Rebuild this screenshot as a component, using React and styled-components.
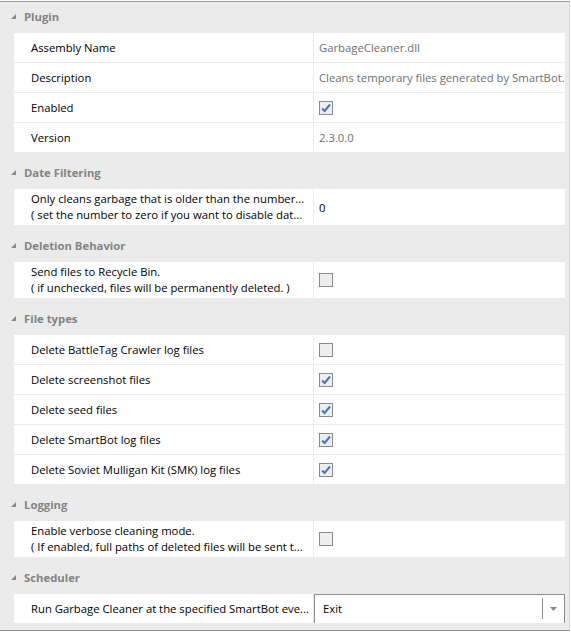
import React from "react";
import { styled, createGlobalStyle } from "styled-components";

const Global = createGlobalStyle`
  html, body {
    margin: 0;
    padding: 0;
    background: #ffffff;
  }
  body {
    font-family: "Segoe UI", "Open Sans", "Noto Sans", sans-serif;
    font-size: 11.3px;
  }
`;

const Frame = styled.div`
  width: 571px;
  height: 632px;
  padding-top: 1px;
  box-sizing: border-box;
`;

const Panel = styled.div`
  width: 570px;
  height: 630px;
  box-sizing: border-box;
  background: #ebebeb;
  border-top: 1px solid #9c9c9c;
  border-bottom: 1px solid #8e8e8e;
  border-right: 1px solid #d6d6d6;
  padding: 0 4px 0 14px;
  overflow: hidden;
`;

const Category = styled.section`
  &:not(:first-child) {
    margin-top: 5px;
  }
`;

const Header = styled.div`
  display: flex;
  align-items: center;
  height: ${(p) => (p.$first ? 31 : 32)}px;
  padding-bottom: 2px;
  box-sizing: border-box;
  margin-left: -14px;
  padding-left: 11px;
  gap: 8px;
  color: #848484;
  font-weight: bold;
`;

const Rows = styled.div`
  display: flex;
  flex-direction: column;
  gap: 1px;
`;

const Row = styled.div`
  display: grid;
  grid-template-columns: 299px 1fr;
  column-gap: 1px;
  height: ${(p) => (p.$tall ? 36 : 29)}px;
`;

const Name = styled.div`
  background: #ffffff;
  color: #000000;
  padding-left: 17px;
  display: flex;
  flex-direction: column;
  justify-content: center;
  line-height: 16px;
  white-space: nowrap;
  overflow: hidden;
`;

const Value = styled.div`
  background: #ffffff;
  color: ${(p) => (p.$readonly ? "#6f6f6f" : "#000000")};
  padding-left: 5px;
  display: flex;
  align-items: center;
  white-space: nowrap;
  overflow: hidden;
`;

const Box = styled.div`
  width: 14px;
  height: 14px;
  box-sizing: border-box;
  border: 1px solid #8a8a8a;
  background: #eeeeee;
  display: flex;
  align-items: center;
  justify-content: center;
`;

const Combo = styled.div`
  flex: 1;
  height: 30px;
  box-sizing: border-box;
  border: 1px solid #8c8c8c;
  display: flex;
  align-items: center;
  margin-left: -5px;
`;

const ComboText = styled.span`
  flex: 1;
  padding-left: 8px;
  color: #000000;
`;

const ComboButton = styled.div`
  width: 21px;
  height: 21px;
  border-left: 1px solid #8c8c8c;
  display: flex;
  align-items: center;
  justify-content: center;
`;

const Glyph = () => (
  <svg width="5" height="5" viewBox="0 0 5 5">
    <polygon points="5,0 5,5 0,5" fill="#8a8a8a" />
  </svg>
);

const Check = ({ on }) => (
  <Box>
    {on && (
      <svg width="12" height="12" viewBox="0 0 12 12">
        <path d="M2 6.5 L4.6 9 L10 2.5" fill="none" stroke="#3f7cb5" strokeWidth="2" />
      </svg>
    )}
  </Box>
);

const Arrow = () => (
  <svg width="7" height="4" viewBox="0 0 7 4">
    <polygon points="0,0 7,0 3.5,4" fill="#8a8a8a" />
  </svg>
);

const data = [
  {
    title: "Plugin",
    rows: [
      { name: ["Assembly Name"], value: "GarbageCleaner.dll", readonly: true },
      { name: ["Description"], value: "Cleans temporary files generated by SmartBot.", readonly: true },
      { name: ["Enabled"], check: true },
      { name: ["Version"], value: "2.3.0.0", readonly: true },
    ],
  },
  {
    title: "Date Filtering",
    rows: [
      {
        name: [
          "Only cleans garbage that is older than the number...",
          "( set the number to zero if you want to disable dat...",
        ],
        value: "0",
      },
    ],
  },
  {
    title: "Deletion Behavior",
    rows: [
      {
        name: ["Send files to Recycle Bin.", "( if unchecked, files will be permanently deleted. )"],
        check: false,
      },
    ],
  },
  {
    title: "File types",
    rows: [
      { name: ["Delete BattleTag Crawler log files"], check: false },
      { name: ["Delete screenshot files"], check: true },
      { name: ["Delete seed files"], check: true },
      { name: ["Delete SmartBot log files"], check: true },
      { name: ["Delete Soviet Mulligan Kit (SMK) log files"], check: true },
    ],
  },
  {
    title: "Logging",
    rows: [
      {
        name: ["Enable verbose cleaning mode.", "( If enabled, full paths of deleted files will be sent t..."],
        check: false,
      },
    ],
  },
  {
    title: "Scheduler",
    rows: [{ name: ["Run Garbage Cleaner at the specified SmartBot eve..."], combo: "Exit" }],
  },
];

const App = () => {
  return (
    <>
      <Global />
      <Frame>
        <Panel>
          {data.map((cat, i) => (
            <Category key={cat.title}>
              <Header $first={i === 0}>
                <Glyph />
                {cat.title}
              </Header>
              <Rows>
                {cat.rows.map((row) => (
                  <Row key={row.name[0]} $tall={row.name.length > 1}>
                    <Name>
                      {row.name.map((line) => (
                        <span key={line}>{line}</span>
                      ))}
                    </Name>
                    <Value $readonly={row.readonly}>
                      {row.check !== undefined && <Check on={row.check} />}
                      {row.value}
                      {row.combo && (
                        <Combo>
                          <ComboText>{row.combo}</ComboText>
                          <ComboButton>
                            <Arrow />
                          </ComboButton>
                        </Combo>
                      )}
                    </Value>
                  </Row>
                ))}
              </Rows>
            </Category>
          ))}
        </Panel>
      </Frame>
    </>
  );
};

export default App;
